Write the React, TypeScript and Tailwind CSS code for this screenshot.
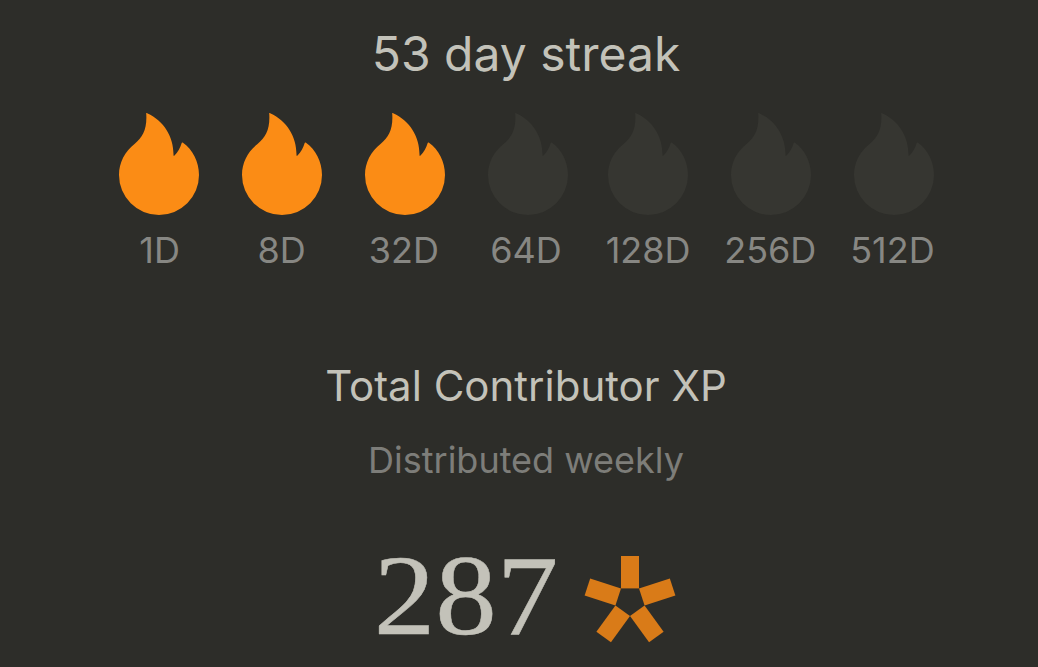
const STREAKS = [
  { label: "1D", reached: true },
  { label: "8D", reached: true },
  { label: "32D", reached: true },
  { label: "64D", reached: false },
  { label: "128D", reached: false },
  { label: "256D", reached: false },
  { label: "512D", reached: false },
];

function Flame({ className }: { className: string }) {
  return (
    <svg viewBox="0 0 80 102" className={`h-[102px] w-[80px] shrink-0 ${className}`} fill="currentColor">
      <path d="M27.2 .3C27.2 -.1 27.8 0 28.2 .2C45.5 8 54.8 24.5 54.5 42.2C54.5 42.9 55 43 55.5 42.5C59 39 61.3 34.6 62.6 30.2C62.8 29.4 63.4 29.3 64 29.8C73.7 36.8 80 48.5 80 62A40 40 0 0 1 0 62C0 49.4 6 38.5 15.5 31C24 24.2 28.3 15.5 27.2 .3Z" />
    </svg>
  );
}

function XpMark() {
  return (
    <svg viewBox="0 0 92 88" className="h-[88px] w-[92px] text-[#d97b18]" fill="currentColor">
      {[0, 72, 144, 216, 288].map((angle) => (
        <rect key={angle} x="37" y="1" width="18" height="32.4" transform={`rotate(${angle} 46 45.8)`} />
      ))}
    </svg>
  );
}

export default function App() {
  return (
    <div className="flex h-[667px] w-[1038px] flex-col items-center overflow-hidden bg-[#2d2d29] pl-[14px] font-['Inter',sans-serif] text-[#c3c2b9]">
      <h1 className="mt-[24px] text-[48px] leading-[60px]">53 day streak</h1>

      {/* Streak milestones */}
      <div className="mt-[29px] flex gap-[43px]">
        {STREAKS.map((s) => (
          <Flame
            key={s.label}
            className={`${s.reached ? "text-[#fb8c15]" : "text-[#363631]"} ${s.label === "128D" ? "-ml-[3px]" : ""}`}
          />
        ))}
      </div>
      <div className="mt-[13px] grid w-[855px] grid-cols-7 text-center text-[36px] leading-[44px] text-[#878783]">
        {STREAKS.map((s) => (
          <span key={s.label}>{s.label}</span>
        ))}
      </div>

      <h2 className="mt-[88px] text-[42px] leading-[52px]">Total Contributor XP</h2>
      <p className="mt-[26px] text-[36px] leading-[44px] text-[#7d7d79]">Distributed weekly</p>

      <div className="mt-[66px] flex h-[100px] items-start gap-[28px]">
        <span className="-mt-[2px] w-[180px] scale-x-[1.07] text-center font-['Liberation_Serif',serif] text-[115px] leading-[100px] [-webkit-text-stroke:0.5px_#c3c2b9]">
          287
        </span>
        <div className="mt-[7px]">
          <XpMark />
        </div>
      </div>
    </div>
  );
}
